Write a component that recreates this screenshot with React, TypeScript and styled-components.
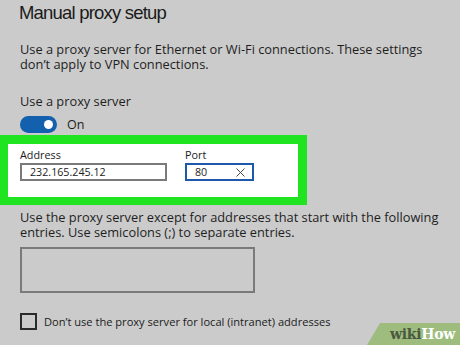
import React from "react";
import styled, { createGlobalStyle } from "styled-components";

const Global = createGlobalStyle`
  html, body { margin: 0; padding: 0; background: #cbcbcb; }
  body { font-family: "Open Sans", "Noto Sans", sans-serif; color: #1b1b1b; }
  * { box-sizing: border-box; }
`;

const Page = styled.div`
  position: relative;
  width: 460px;
  height: 345px;
  overflow: hidden;
  background: #cbcbcb;
  display: flex;
  flex-direction: column;
`;

const Title = styled.h1`
  margin: -1px 0 0 0;
  padding-left: 19px;
  font-family: "Liberation Sans", Arial, sans-serif;
  font-size: 18.5px;
  font-weight: 400;
  letter-spacing: -0.8px;
  line-height: 28px;
  color: #1a1a1a;
`;

const Text = styled.p<{ $mt: number }>`
  margin: ${(p) => p.$mt}px 0 0 0;
  padding-left: 20px;
  font-size: 12.8px;
  line-height: 15px;
  color: #1e1e1e;
  white-space: nowrap;
`;

const ToggleRow = styled.div`
  margin-top: 7px;
  padding-left: 20px;
  display: flex;
  align-items: center;
  gap: 10px;
  height: 17px;
  font-size: 12.5px;
`;

const Toggle = styled.span`
  position: relative;
  width: 37px;
  height: 17px;
  border-radius: 9px;
  background: #1360ae;
  &::after {
    content: "";
    position: absolute;
    right: 4px;
    top: 4px;
    width: 9px;
    height: 9px;
    border-radius: 50%;
    background: #fff;
  }
`;

const Highlight = styled.div`
  margin-top: 2px;
  width: 307px;
  height: 70px;
  border: solid #1fe41f;
  border-width: 9px 9px 8px 8px;
  background: #fff;
  display: flex;
  gap: 18px;
  padding: 4px 0 0 12px;
`;

const Field = styled.div`
  display: flex;
  flex-direction: column;
`;

const Label = styled.label`
  font-size: 10.8px;
  line-height: 13px;
  color: #1b1b1b;
`;

const Input = styled.div<{ $w: number; $active?: boolean }>`
  margin-top: 2px;
  width: ${(p) => p.$w}px;
  height: 18px;
  border: 2px solid ${(p) => (p.$active ? "#1d59a8" : "#7a7a7a")};
  display: flex;
  align-items: center;
  justify-content: space-between;
  padding: 0 7px 0 8px;
  font-size: 10.7px;
  color: #222;
`;

const TextArea = styled.div`
  margin: 7px 0 0 20px;
  width: 235px;
  height: 46px;
  border: 2px solid #7a7a7a;
`;

const CheckRow = styled.div`
  margin-top: 20px;
  padding-left: 20px;
  display: flex;
  align-items: center;
  gap: 7px;
  font-size: 11.1px;
`;

const Box = styled.span`
  width: 17px;
  height: 17px;
  border: 2px solid #2a2a2a;
`;

const Badge = styled.div`
  position: absolute;
  right: 0;
  bottom: 0;
  width: 93px;
  height: 22px;
  background: #9dbc7d;
  clip-path: polygon(14% 0, 100% 0, 100% 100%, 0 100%);
  display: flex;
  align-items: center;
  justify-content: flex-end;
  padding-right: 5px;
  font-family: "DejaVu Serif", "Liberation Serif", serif;
  font-weight: 700;
  font-size: 14px;
  letter-spacing: -0.3px;
`;

const Wiki = styled.span`
  color: #4a5840;
`;
const How = styled.span`
  color: #fff;
`;

export default function App() {
  return (
    <>
      <Global />
      <Page>
        <Title>Manual proxy setup</Title>
        <Text $mt={15}>
          Use a proxy server for Ethernet or Wi-Fi connections. These settings
          <br />
          don’t apply to VPN connections.
        </Text>
        <Text $mt={22}>Use a proxy server</Text>
        <ToggleRow>
          <Toggle />
          <span>On</span>
        </ToggleRow>
        <Highlight>
          <Field>
            <Label>Address</Label>
            <Input $w={147}>232.165.245.12</Input>
          </Field>
          <Field>
            <Label>Port</Label>
            <Input $w={69} $active>
              80
              <svg width="9" height="9" viewBox="0 0 9 9">
                <path d="M0.5 0.5 L8.5 8.5 M8.5 0.5 L0.5 8.5" stroke="#444" strokeWidth="1" />
              </svg>
            </Input>
          </Field>
        </Highlight>
        <Text $mt={5}>
          Use the proxy server except for addresses that start with the following
          <br />
          entries. Use semicolons (;) to separate entries.
        </Text>
        <TextArea />
        <CheckRow>
          <Box />
          <span>Don’t use the proxy server for local (intranet) addresses</span>
        </CheckRow>
        <Badge>
          <Wiki>wiki</Wiki>
          <How>How</How>
        </Badge>
      </Page>
    </>
  );
}
